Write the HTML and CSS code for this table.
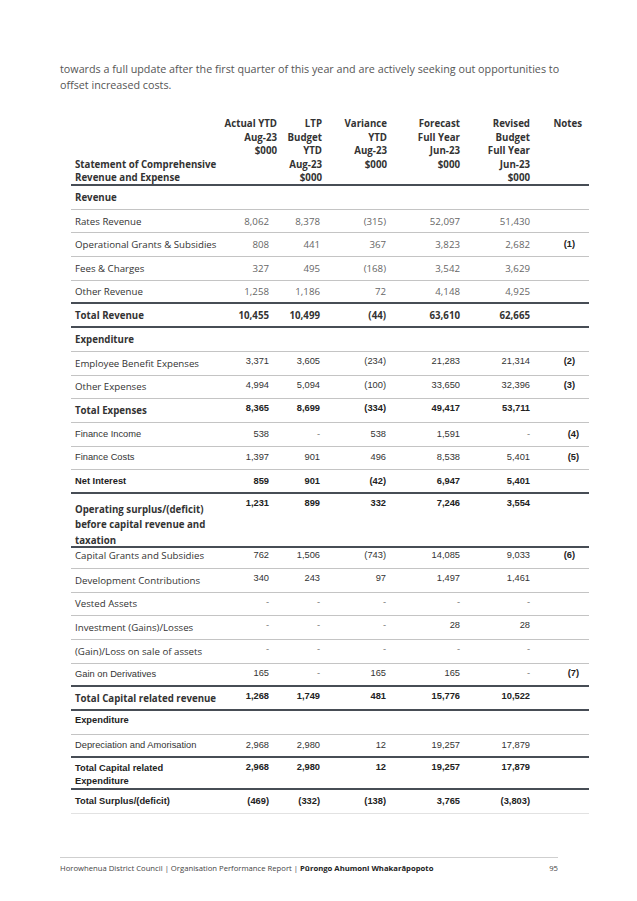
FILE: index.html
```html
<!DOCTYPE html>
<html lang="en">
<head>
<meta charset="utf-8">
<title>Statement of Comprehensive Revenue and Expense</title>
<link rel="stylesheet" href="styles.css">
</head>
<body>
<div class="page">
  <p class="intro">towards a full update after the first quarter of this year and are actively seeking out opportunities to offset increased costs.</p>

  <div class="fs">
    <div class="hdr">
      <div class="hl">Statement of Comprehensive<br>Revenue and Expense</div>
      <div>Actual YTD<br>Aug-23<br>$000</div>
      <div>LTP<br>Budget<br>YTD<br>Aug-23<br>$000</div>
      <div>Variance<br>YTD<br>Aug-23<br>$000</div>
      <div>Forecast<br>Full Year<br>Jun-23<br>$000</div>
      <div>Revised<br>Budget<br>Full Year<br>Jun-23<br>$000</div>
      <div>Notes</div>
    </div>

    <div class="row os sec"><div class="l b">Revenue</div></div>
    <div class="row os"><div class="l">Rates Revenue</div><div>8,062</div><div>8,378</div><div>(315)</div><div>52,097</div><div>51,430</div><div></div></div>
    <div class="row os"><div class="l">Operational Grants &amp; Subsidies</div><div>808</div><div>441</div><div>367</div><div>3,823</div><div>2,682</div><div class="n">(1)</div></div>
    <div class="row os"><div class="l">Fees &amp; Charges</div><div>327</div><div>495</div><div>(168)</div><div>3,542</div><div>3,629</div><div></div></div>
    <div class="row os thick"><div class="l">Other Revenue</div><div>1,258</div><div>1,186</div><div>72</div><div>4,148</div><div>4,925</div><div></div></div>
    <div class="row os bold thick"><div class="l">Total Revenue</div><div>10,455</div><div>10,499</div><div>(44)</div><div>63,610</div><div>62,665</div><div></div></div>

    <div class="row os sec"><div class="l b">Expenditure</div></div>
    <div class="row ar up"><div class="l osl">Employee Benefit Expenses</div><div>3,371</div><div>3,605</div><div>(234)</div><div>21,283</div><div>21,314</div><div class="n">(2)</div></div>
    <div class="row ar up"><div class="l osl">Other Expenses</div><div>4,994</div><div>5,094</div><div>(100)</div><div>33,650</div><div>32,396</div><div class="n">(3)</div></div>
    <div class="row ar up bold"><div class="l osl">Total Expenses</div><div>8,365</div><div>8,699</div><div>(334)</div><div>49,417</div><div>53,711</div><div></div></div>
    <div class="row ar"><div class="l">Finance Income</div><div>538</div><div class="d">-</div><div>538</div><div>1,591</div><div class="d">-</div><div class="n n2">(4)</div></div>
    <div class="row ar"><div class="l">Finance Costs</div><div>1,397</div><div>901</div><div>496</div><div>8,538</div><div>5,401</div><div class="n n2">(5)</div></div>
    <div class="row ar bold thick"><div class="l">Net Interest</div><div>859</div><div>901</div><div>(42)</div><div>6,947</div><div>5,401</div><div></div></div>

    <div class="row ar bold thick tall up"><div class="l osl lt">Operating surplus/(deficit)<br>before capital revenue and<br>taxation</div><div>1,231</div><div>899</div><div>332</div><div>7,246</div><div>3,554</div><div></div></div>
    <div class="row ar short"><div class="l osl">Capital Grants and Subsidies</div><div>762</div><div>1,506</div><div>(743)</div><div>14,085</div><div>9,033</div><div class="n">(6)</div></div>
    <div class="row ar up"><div class="l osl">Development Contributions</div><div>340</div><div>243</div><div>97</div><div>1,497</div><div>1,461</div><div></div></div>
    <div class="row ar up"><div class="l osl">Vested Assets</div><div class="d">-</div><div class="d">-</div><div class="d">-</div><div class="d">-</div><div class="d">-</div><div></div></div>
    <div class="row ar up"><div class="l osl">Investment (Gains)/Losses</div><div class="d">-</div><div class="d">-</div><div class="d">-</div><div>28</div><div>28</div><div></div></div>
    <div class="row ar up"><div class="l osl">(Gain)/Loss on sale of assets</div><div class="d">-</div><div class="d">-</div><div class="d">-</div><div class="d">-</div><div class="d">-</div><div></div></div>
    <div class="row ar up thick"><div class="l">Gain on Derivatives</div><div>165</div><div class="d">-</div><div>165</div><div>165</div><div class="d">-</div><div class="n n2">(7)</div></div>
    <div class="row ar up bold thick"><div class="l osl">Total Capital related revenue</div><div>1,268</div><div>1,749</div><div>481</div><div>15,776</div><div>10,522</div><div></div></div>

    <div class="row ar bold"><div class="l lhi">Expenditure</div></div>
    <div class="row ar thick"><div class="l">Depreciation and Amorisation</div><div>2,968</div><div>2,980</div><div>12</div><div>19,257</div><div>17,879</div><div></div></div>
    <div class="row ar bold thick mid up"><div class="l lt2">Total Capital related<br>Expenditure</div><div>2,968</div><div>2,980</div><div>12</div><div>19,257</div><div>17,879</div><div></div></div>
    <div class="row ar bold last"><div class="l">Total Surplus/(deficit)</div><div>(469)</div><div>(332)</div><div>(138)</div><div>3,765</div><div>(3,803)</div><div></div></div>
  </div>

  <div class="footer">
    <span>Horowhenua District Council | Organisation Performance Report | <b>Pūrongo Ahumoni Whakarāpopoto</b></span>
    <span>95</span>
  </div>
</div>
</body>
</html>
```

FILE: styles.css
```css
html, body {
  margin: 0;
  padding: 0;
  background: #ffffff;
}

body {
  font-family: "Open Sans", "Liberation Sans", sans-serif;
  color: #333333;
}

.page {
  width: 637px;
  height: 901px;
  box-sizing: border-box;
  padding: 61px 0 0 60px;
  display: flex;
  flex-direction: column;
}

.intro {
  margin: 0;
  width: 520px;
  font-size: 10.75px;
  line-height: 16px;
  color: #555555;
}

.fs {
  margin: 24px 0 0 11px;
  width: 518px;
}

.hdr,
.row {
  display: grid;
  grid-template-columns: 151px 58px 48px 67px 73px 69px 52px;
  box-sizing: border-box;
}

.hdr {
  height: 69px;
  border-bottom: 2px solid #474d55;
  font-weight: 700;
  font-size: 9.7px;
  line-height: 13.5px;
  color: #333333;
  text-align: right;
  align-items: start;
}

.hdr > .hl {
  text-align: left;
  align-self: end;
  padding-left: 4px;
  padding-bottom: 0;
}

.hdr > :nth-child(2) { padding-right: 3px; }
.hdr > :nth-child(3) { padding-right: 6px; }
.hdr > :nth-child(4) { padding-right: 8px; }
.hdr > :nth-child(5) { padding-right: 8px; }
.hdr > :nth-child(6) { padding-right: 7px; }
.hdr > :nth-child(7) { padding-right: 7px; }

.row {
  height: 23.7px;
  border-bottom: 1px solid #c4c4c4;
  align-items: center;
  text-align: right;
  line-height: 13px;
}

.row > :nth-child(2) { padding-right: 11px; }
.row > :nth-child(3) { padding-right: 8px; }
.row > :nth-child(4) { padding-right: 9px; }
.row > :nth-child(5) { padding-right: 8px; }
.row > :nth-child(6) { padding-right: 7px; }
.row > :nth-child(7) { padding-right: 14px; }

.row > .l {
  text-align: left;
  padding-left: 4px;
}

.row.thick {
  border-bottom: 2px solid #474d55;
}

.row.last {
  border-bottom: 1px solid #e2e2e2;
}

.row.tall {
  height: 54px;
}

.row.short {
  height: 21px;
  align-items: start;
}

.row.short > * {
  padding-top: 1px;
}

.row.mid {
  height: 32px;
}

/* Open Sans rows */
.os {
  font-family: "Open Sans", sans-serif;
  font-size: 9.7px;
  color: #666666;
}

.os > .l {
  color: #333333;
}

.os .b,
.os.bold {
  font-weight: 700;
  color: #333333;
}

/* Arial-like rows */
.ar {
  font-family: "Liberation Sans", Arial, sans-serif;
  font-size: 9.3px;
  color: #333333;
}

.ar.bold {
  font-weight: 700;
  color: #222222;
}

.ar > .osl {
  font-family: "Open Sans", sans-serif;
  font-size: 9.7px;
  color: #333333;
}

.ar.bold > .osl {
  color: #333333;
}

.up > :not(.l) {
  align-self: start;
  padding-top: 3px;
}

.ar .d {
  color: #777777;
}

.n {
  font-family: "Liberation Sans", Arial, sans-serif;
  font-weight: 700;
  font-size: 9.3px;
  color: #222222;
}

.row > .n2 {
  padding-right: 10px;
}

.lt {
  align-self: start;
  padding-top: 8px;
  line-height: 15.5px;
}

.lt2 {
  align-self: start;
  padding-top: 4px;
}

.lhi {
  padding-bottom: 3px;
}

.footer {
  margin-top: auto;
  margin-bottom: 27px;
  width: 498px;
  border-top: 1px solid #cfcfcf;
  padding-top: 5px;
  display: flex;
  justify-content: space-between;
  font-size: 7.7px;
  line-height: 11px;
  color: #444444;
}

.footer b {
  font-weight: 700;
  color: #222222;
}
```
